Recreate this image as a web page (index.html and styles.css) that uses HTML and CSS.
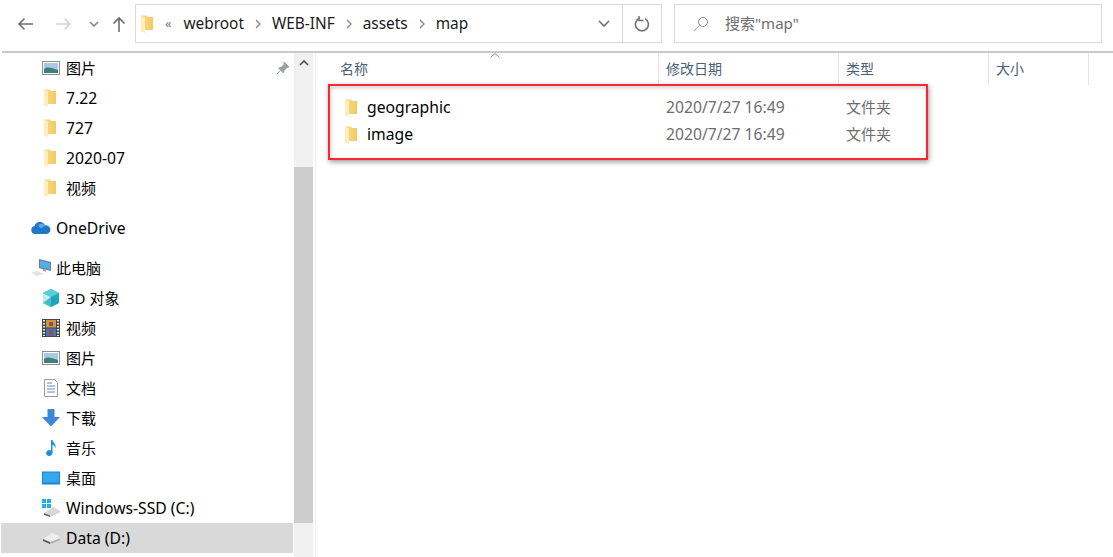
FILE: index.html
```html
<!DOCTYPE html>
<html lang="en">
<head>
  <meta charset="UTF-8">
  <title>map</title>
  <link rel="stylesheet" href="styles.css">
</head>
<body>
  <svg class="defs" width="0" height="0">
    <defs>
      <linearGradient id="folder-back" x1="0" y1="0" x2="1" y2="0">
        <stop offset="0" stop-color="#f7dc8c"/>
        <stop offset="1" stop-color="#f3c95f"/>
      </linearGradient>
      <symbol id="folder" viewBox="0 0 14 18">
        <path d="M1 .5H7L8 2H13V15H5V17.500L1 16Z" fill="url(#folder-back)"/>
        <path d="M1 .5L5 2.500V17.500L1 15.500Z" fill="#fdeebb"/>
      </symbol>
      <symbol id="picture" viewBox="0 0 18 14">
        <rect x="0.5" y="0.5" width="17" height="13" fill="#fff" stroke="#8b8f94"/>
        <rect x="2" y="2" width="14" height="10" fill="#a9c9e6"/>
        <path d="M2 8 C6 5 9 7 16 9 L16 12 L2 12 Z" fill="#3f7f77"/>
      </symbol>
    </defs>
  </svg>

  <div class="toolbar">
    <div class="nav-buttons">
      <svg class="nav-icon back" viewBox="0 0 16 14"><path d="M16 7H2M7.500 1.500 2 7l5.500 5.500" fill="none" stroke="#6e6e6e" stroke-width="1.600"/></svg>
      <svg class="nav-icon forward" viewBox="0 0 16 14"><path d="M0 7h14M8.500 1.500 14 7l-5.500 5.500" fill="none" stroke="#d4d4d4" stroke-width="1.600"/></svg>
      <svg class="nav-icon recent" viewBox="0 0 10 6"><path d="M1 1l4 4 4-4" fill="none" stroke="#858585" stroke-width="1.600"/></svg>
      <svg class="nav-icon up" viewBox="0 0 14 16"><path d="M7 16V2M1.500 7.500 7 2l5.500 5.500" fill="none" stroke="#6e6e6e" stroke-width="1.600"/></svg>
    </div>
    <div class="address">
      <svg class="address-folder"><use href="#folder"/></svg>
      <span class="crumb-more">«</span>
      <span class="crumb">webroot</span>
      <svg class="crumb-sep" viewBox="0 0 6 10" width="6" height="10"><path d="M1 1l4 4-4 4" fill="none" stroke="#8a8a8a" stroke-width="1.400"/></svg>
      <span class="crumb">WEB-INF</span>
      <svg class="crumb-sep" viewBox="0 0 6 10" width="6" height="10"><path d="M1 1l4 4-4 4" fill="none" stroke="#8a8a8a" stroke-width="1.400"/></svg>
      <span class="crumb">assets</span>
      <svg class="crumb-sep" viewBox="0 0 6 10" width="6" height="10"><path d="M1 1l4 4-4 4" fill="none" stroke="#8a8a8a" stroke-width="1.400"/></svg>
      <span class="crumb">map</span>
      <div class="address-actions">
        <div class="address-btn drop">
          <svg viewBox="0 0 12 7" width="12" height="7"><path d="M1 1l5 5 5-5" fill="none" stroke="#707070" stroke-width="1.600"/></svg>
        </div>
        <div class="address-btn refresh">
          <svg viewBox="0 0 16 16" width="16" height="16"><path d="M5.500 2.300A6.500 6.500 0 1 0 11 2.600" fill="none" stroke="#707070" stroke-width="1.600"/><path d="M5 0v4.500h4.500" fill="none" stroke="#707070" stroke-width="1.400"/></svg>
        </div>
      </div>
    </div>
    <div class="search">
      <svg viewBox="0 0 16 16" width="16" height="16"><circle cx="10" cy="6" r="4.500" fill="none" stroke="#8a8a8a"/><path d="M6.800 9.200 1 15" stroke="#a8a8a8" fill="none"/></svg>
      <span class="label">搜索"map"</span>
    </div>
  </div>

  <div class="explorer">
    <div class="sidebar">
      <div class="tree">
        <div class="tree-row"><svg class="icon"><use href="#picture"/></svg><span class="label">图片</span>
          <svg class="pin" viewBox="0 0 14 14" width="14" height="14"><path d="M8 1l5 5-2 .5-3 3-.5 2.500L2.500 7 5 6.500l3-3zM4.500 9.500 1 13" fill="#9aa0a6" stroke="#9aa0a6"/></svg>
        </div>
        <div class="tree-row"><svg class="icon small"><use href="#folder"/></svg><span class="label latin">7.22</span></div>
        <div class="tree-row"><svg class="icon small"><use href="#folder"/></svg><span class="label latin">727</span></div>
        <div class="tree-row"><svg class="icon small"><use href="#folder"/></svg><span class="label latin">2020-07</span></div>
        <div class="tree-row"><svg class="icon small"><use href="#folder"/></svg><span class="label">视频</span></div>

        <div class="tree-row root group">
          <svg class="icon wide" viewBox="0 0 20 14"><path d="M4 13a4 4 0 0 1-.500-7.900A5.500 5.500 0 0 1 14 4.500 4.300 4.300 0 0 1 16 13z" fill="#1f78c8"/><path d="M7 4.500A5 5 0 0 1 14 4.500l-4 3z" fill="#55aee6"/></svg><span class="label latin">OneDrive</span>
        </div>

        <div class="tree-row root group">
          <svg class="icon wide" viewBox="0 0 20 18"><path d="M8 0l12 3v9L8 9z" fill="#6a7f92"/><path d="M9 1.500l10 2.500v6.500L9 8z" fill="#4fb0ea"/><path d="M12 10l3 .8v2l-3-.8z" fill="#9aa6ae"/><path d="M0 13.500l7-1.500 6 3-7 2z" fill="#e2e5e8"/></svg><span class="label">此电脑</span>
        </div>
        <div class="tree-row"><svg class="icon" viewBox="0 0 18 18"><path d="M9 0l8 4v10l-8 4-8-4V4z" fill="#1fa9bf"/><path d="M1 4l8 4v10l-8-4z" fill="#bdeeee"/><path d="M1 4l8-4 8 4-8 4z" fill="#59cdd8"/><path d="M9 8l8 6-8 4-8-4z" fill="#19a2b8" opacity=".7"/></svg><span class="label">3D 对象</span></div>
        <div class="tree-row"><svg class="icon" viewBox="0 0 18 18"><rect x="0" y="0" width="18" height="18" fill="#444"/><rect x="4" y="1" width="10" height="7.500" fill="#c79a4a"/><rect x="4" y="9.500" width="10" height="7.500" fill="#3b78c0"/><path d="M7 3h4v4H7zM7 11h4v5H7z" fill="#a5482f"/><path d="M2 1v16M16 1v16" stroke="#eee" stroke-width="2" stroke-dasharray="1.500 1.500"/></svg><span class="label">视频</span></div>
        <div class="tree-row"><svg class="icon"><use href="#picture"/></svg><span class="label">图片</span></div>
        <div class="tree-row"><svg class="icon" viewBox="0 0 18 18"><path d="M2.500 .5h10l3 3v14h-13z" fill="#fff" stroke="#9a9a9a"/><path d="M5 4h5M5 7h8M5 10h8M5 13h8" stroke="#5b8fc0"/></svg><span class="label">文档</span></div>
        <div class="tree-row"><svg class="icon" viewBox="0 0 18 18"><path d="M5.500 0h7v8H18l-9 9.500L0 8h5.500z" fill="#3d86d8"/></svg><span class="label">下载</span></div>
        <div class="tree-row"><svg class="icon" viewBox="0 0 18 18"><path d="M9 1h1.500c.5 3 4 4 3 8-.5-2-2-3-3-3.500V14a3.200 3 0 1 1-1.500-2.500z" fill="#1f8ee0"/></svg><span class="label">音乐</span></div>
        <div class="tree-row"><svg class="icon" viewBox="0 0 18 14"><rect x="0" y="0.500" width="18" height="13" fill="#1387d8"/><rect x="1" y="1.500" width="16" height="10" fill="#36a8ea"/></svg><span class="label">桌面</span></div>
        <div class="tree-row"><svg class="icon" viewBox="0 0 18 18"><rect x="0" y="0" width="4" height="4" fill="#20b0ee"/><rect x="5" y="0" width="4" height="4" fill="#20b0ee"/><rect x="0" y="5" width="4" height="4" fill="#20b0ee"/><rect x="5" y="5" width="4" height="4" fill="#20b0ee"/><path d="M2 14l9-6 7 3.500v2L8 18z" fill="#d6d9da"/><path d="M2 14l6 2.500V18L2 16z" fill="#666"/></svg><span class="label latin">Windows-SSD (C:)</span></div>
        <div class="tree-row selected"><svg class="icon drive" viewBox="0 0 18 11"><path d="M1 6l9-6 8 3.500v2L8 10z" fill="#eceeee"/><path d="M1 6l7 3v2L1 8z" fill="#5a5a5a"/><path d="M8 9l10-3.500V7L8 11z" fill="#a9abab"/></svg><span class="label latin">Data (D:)</span></div>
      </div>
      <div class="scrollbar">
        <div class="scroll-up"><svg viewBox="0 0 10 6" width="10" height="6"><path d="M1 5l4-4 4 4" fill="none" stroke="#505050" stroke-width="1.600"/></svg></div>
        <div class="scroll-thumb"></div>
      </div>
    </div>

    <div class="content">
      <div class="columns">
        <div class="col name"><span class="label">名称</span><svg class="sort" viewBox="0 0 10 5" width="10" height="5"><path d="M.5 4.500 5 .5l4.500 4" fill="none" stroke="#888"/></svg></div>
        <div class="col date"><span class="label">修改日期</span></div>
        <div class="col type"><span class="label">类型</span></div>
        <div class="col size"><span class="label">大小</span></div>
      </div>
      <div class="files">
        <div class="file"><div class="file-name"><svg class="file-icon"><use href="#folder"/></svg><span class="label latin">geographic</span></div><div class="file-date"><span class="label latin">2020/7/27 16:49</span></div><div class="file-type"><span class="label">文件夹</span></div></div>
        <div class="file"><div class="file-name"><svg class="file-icon"><use href="#folder"/></svg><span class="label latin">image</span></div><div class="file-date"><span class="label latin">2020/7/27 16:49</span></div><div class="file-type"><span class="label">文件夹</span></div></div>
      </div>
      <div class="highlight"></div>
    </div>
  </div>
</body>
</html>
```

FILE: styles.css
```css
* {
  box-sizing: border-box;
}

body {
  margin: 0;
  width: 1113px;
  height: 557px;
  overflow: hidden;
  background-color: #ffffff;
  color: #000000;
  font-family: "Noto Sans", "Noto Sans CJK SC", sans-serif;
  font-size: 15px;
}

.defs {
  position: absolute;
}

/* text sits a pixel above the middle of its row */
.label {
  display: block;
  margin-bottom: 2px;
}

.latin {
  font-size: 15.7px;
}

.tree-row .latin {
  margin-bottom: 0;
}

.toolbar {
  display: flex;
  align-items: flex-start;
  height: 53px;
  margin-left: 2px;
  padding-top: 4px;
  border-bottom: 2px solid #c9c9c9;
}

.nav-buttons {
  display: flex;
  align-items: center;
  width: 133px;
  height: 39px;
}

.nav-icon.back {
  width: 16px;
  height: 14px;
  margin-left: 15px;
}

.nav-icon.forward {
  width: 16px;
  height: 14px;
  margin-left: 23px;
}

.nav-icon.recent {
  width: 10px;
  height: 6px;
  margin-left: 17px;
}

.nav-icon.up {
  width: 14px;
  height: 16px;
  margin-left: 13px;
}

.address {
  display: flex;
  align-items: center;
  width: 527px;
  height: 39px;
  border: 1px solid #d9d9d9;
  color: #1a1a1a;
}

.address-folder {
  width: 14px;
  height: 18px;
  margin-left: 4px;
  margin-right: 11px;
}

.crumb-more {
  color: #777777;
  font-size: 13px;
  width: 18.5px;
  margin-bottom: 2px;
}

.crumb {
  font-size: 15.4px;
  white-space: nowrap;
}

.crumb-sep {
  margin: 0 11px;
}

.address-actions {
  display: flex;
  margin-left: auto;
  height: 100%;
}

.address-btn {
  display: flex;
  align-items: center;
  justify-content: center;
  height: 100%;
}

.address-btn.drop {
  width: 36px;
}

.address-btn.refresh {
  width: 39px;
  border-left: 1px solid #d9d9d9;
}

.search {
  display: flex;
  align-items: center;
  gap: 16px;
  width: 428px;
  height: 39px;
  margin-left: 12px;
  padding-left: 18px;
  border: 1px solid #d9d9d9;
  color: #6d6d6d;
}

.explorer {
  display: flex;
  height: 504px;
}

.sidebar {
  display: flex;
  width: 316px;
  border-right: 1px solid #f0f0f0;
}

.tree {
  width: 294px;
  padding-left: 1px;
}

.tree-row {
  display: flex;
  align-items: center;
  position: relative;
  height: 30px;
  padding-left: 41px;
  white-space: nowrap;
}

.tree-row.group {
  margin-top: 10px;
}

.tree-row.root {
  padding-left: 30px;
}

.tree-row.selected {
  background-color: #d9d9d9;
  width: 292px;
}

.icon {
  width: 18px;
  height: 18px;
  margin-right: 6px;
  flex-shrink: 0;
}

.icon.small {
  width: 14px;
  height: 18px;
  margin-left: 1px;
  margin-right: 9px;
}

.icon.wide {
  width: 20px;
  margin-right: 5px;
}

.icon.drive {
  height: 11px;
}

.pin {
  position: absolute;
  left: 275px;
  top: 8px;
}

.scrollbar {
  width: 19px;
  background-color: #f0f0f0;
}

.scroll-up {
  display: flex;
  justify-content: center;
  align-items: center;
  height: 17px;
  padding-top: 2px;
}

.scroll-thumb {
  height: 356px;
  margin-top: 97px;
  background-color: #cdcdcd;
}

.content {
  position: relative;
  flex: 1;
}

.columns {
  display: flex;
  height: 32px;
  color: #4c607a;
  font-size: 14px;
}

.col {
  position: relative;
  display: flex;
  align-items: center;
  padding-left: 7px;
  border-right: 1px solid #e5e5e5;
}

.col.name {
  width: 343px;
  padding-left: 24px;
}

.col.date {
  width: 180px;
}

.col.type {
  width: 150px;
}

.col.size {
  width: 100px;
}

.sort {
  position: absolute;
  left: 174px;
  top: 0;
}

.files {
  padding-top: 9px;
}

.file {
  display: flex;
  align-items: center;
  height: 27px;
}

.file-name {
  display: flex;
  align-items: center;
  width: 343px;
  padding-left: 28px;
}

.file-icon {
  width: 14px;
  height: 18px;
  margin-right: 9px;
}

.file-date {
  width: 187px;
  padding-left: 7px;
  color: #6d6d6d;
}

.file-type {
  color: #6d6d6d;
}

.highlight {
  position: absolute;
  left: 12px;
  top: 31px;
  width: 600px;
  height: 76px;
  border: 2px solid #f92733;
  box-shadow: 1px 2px 5px rgba(0, 0, 0, 0.4), inset 1px 2px 4px rgba(0, 0, 0, 0.18);
}
```
